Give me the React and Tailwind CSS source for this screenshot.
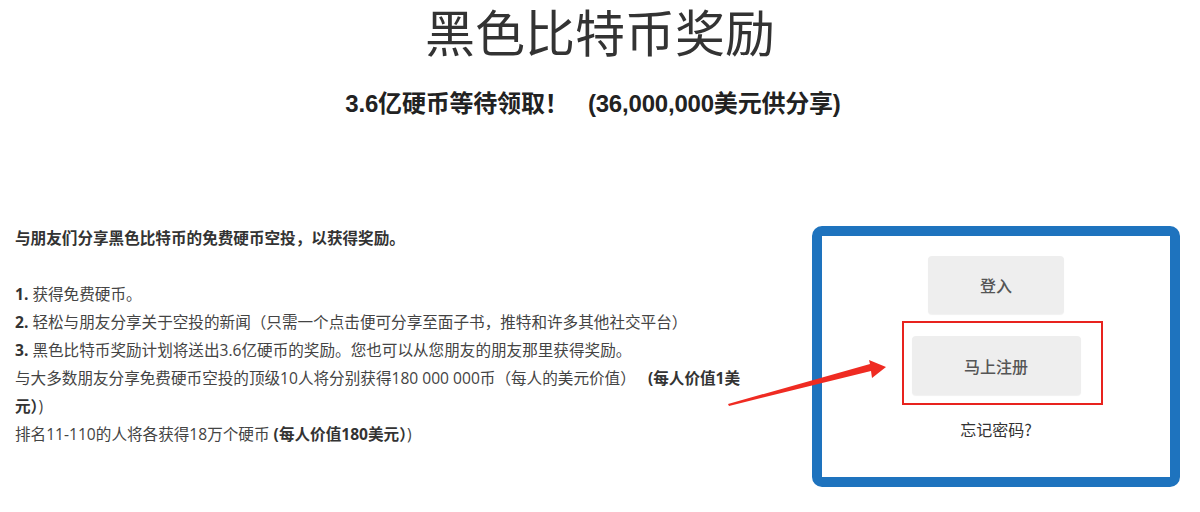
export default function App() {
  return (
    <div
      className="relative h-[512px] w-[1200px] overflow-hidden bg-white text-[#444]"
      style={{ fontFamily: "'Open Sans', 'Noto Sans CJK SC', sans-serif" }}
    >
      {/* HEADER */}
      <div className="text-center">
        <h1
          className="text-[50px] leading-[60px] font-normal text-[#333]"
          style={{ fontFamily: "'Noto Sans CJK SC', sans-serif" }}
        >
          黑色比特币奖励
        </h1>
        <h2
          className="mt-[29px] pr-[14px] text-[24px] leading-[30px] font-bold tracking-[-0.2px] text-[#222]"
          style={{ fontFamily: "'Liberation Sans', 'Noto Sans CJK SC', sans-serif" }}
        >
          3.6亿硬币等待领取！&nbsp;&nbsp;&nbsp;(36,000,000美元供分享)
        </h2>
      </div>

      {/* CONTENT */}
      <div className="mt-[105px] flex items-start">
        <div className="w-[790px] pl-[15px] text-[15.6px] leading-[28px]">
          <p className="font-bold text-[#333]">
            与朋友们分享黑色比特币的免费硬币空投，以获得奖励。
          </p>
          <br />
          <p>
            <b className="text-[#333]">1.</b> 获得免费硬币。
            <br />
            <b className="text-[#333]">2.</b> 轻松与朋友分享关于空投的新闻（只需一个点击便可分享至面子书，推特和许多其他社交平台）
            <br />
            <b className="text-[#333]">3.</b> 黑色比特币奖励计划将送出3.6亿硬币的奖励。您也可以从您朋友的朋友那里获得奖励。
            <br />
            与大多数朋友分享免费硬币空投的顶级10人将分别获得180 000 000币（每人的美元价值）&nbsp;&nbsp;&nbsp;
            <b className="text-[#333]">
              (每人价值1美
              <br />
              元）
            </b>
            )
            <br />
            排名11-110的人将各获得18万个硬币 <b className="text-[#333]">(每人价值180美元）</b>)
          </p>
        </div>

        {/* LOGIN BOX */}
        <div
          className="ml-auto mr-[20px] mt-[2px] flex h-[261px] w-[368px] flex-col items-center rounded-[10px] border-[10px] border-[#1e73be] bg-white pt-[20px]"
          style={{ fontFamily: "'Noto Sans CJK SC', sans-serif" }}
        >
          <button className="h-[58px] w-[136px] rounded-[4px] bg-[#eeeeee] text-[16px] font-medium text-[#555] shadow-[0_1px_1px_rgba(0,0,0,0.06)]">
            登入
          </button>
          <div className="relative mt-[22px]">
            <button className="h-[59px] w-[169px] rounded-[4px] bg-[#eeeeee] text-[16px] font-medium text-[#555] shadow-[0_1px_1px_rgba(0,0,0,0.06)]">
              马上注册
            </button>
            <div className="pointer-events-none absolute -top-[15px] -bottom-[10px] -left-[10px] -right-[22px] border-2 border-[#e8231e]" />
          </div>
          <a className="mt-[22px] text-[16px] text-[#333]">忘记密码?</a>
        </div>
      </div>

      {/* ARROW */}
      <svg
        className="pointer-events-none absolute left-[720px] top-[350px]"
        width="180"
        height="70"
        viewBox="0 0 180 70"
      >
        <polygon
          points="8,54 150,14 149,10 166,17 152,28 151,21 9,56"
          fill="#ef2b22"
        />
      </svg>
    </div>
  );
}
